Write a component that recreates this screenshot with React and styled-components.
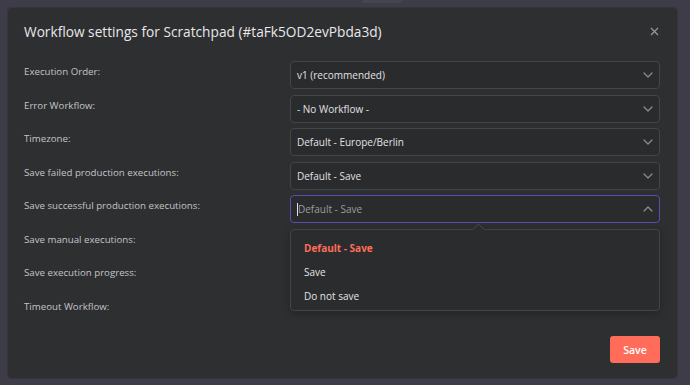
import React from "react"
import styled, { createGlobalStyle } from "styled-components"

const GlobalStyle = createGlobalStyle`
  html, body {
    margin: 0;
    padding: 0;
    background: #3e3c49;
    font-family: "Open Sans", "Liberation Sans", sans-serif;
  }
`

// rows covered by the open dropdown keep their label only
const settings = [
  { label: "Execution Order:", value: "v1 (recommended)" },
  { label: "Error Workflow:", value: "- No Workflow -" },
  { label: "Timezone:", value: "Default - Europe/Berlin" },
  { label: "Save failed production executions:", value: "Default - Save" },
  { label: "Save successful production executions:", value: "Default - Save", open: true },
  { label: "Save manual executions:", value: "" },
  { label: "Save execution progress:", value: "" },
  { label: "Timeout Workflow:", value: "" },
]

const options = ["Default - Save", "Save", "Do not save"]

const Chevron = ({ up }) => (
  <svg width="10" height="6" viewBox="0 0 10 6" fill="none">
    <path
      d={up ? "M1 5 L5 1 L9 5" : "M1 1 L5 5 L9 1"}
      stroke="#8d8d92"
      strokeWidth="1.2"
      strokeLinecap="round"
      strokeLinejoin="round"
    />
  </svg>
)

const App = () => {
  return (
    <Screen>
      <GlobalStyle />
      <Tab />
      <Dialog>
        <Header>
          <Title>Workflow settings for Scratchpad (#taFk5OD2evPbda3d)</Title>
          <Close aria-label="close">
            <svg width="9" height="9" viewBox="0 0 9 9">
              <path d="M1 1 L8 8 M8 1 L1 8" stroke="#9a9aa0" strokeWidth="1.1" />
            </svg>
          </Close>
        </Header>
        <Form>
          {settings.map((s) => (
            <Row key={s.label}>
              <Label>{s.label}</Label>
              <Field>
                {s.value && (
                  <Select $focused={s.open}>
                    <SelectText $placeholder={s.open}>
                      {s.open && <Caret />}
                      {s.value}
                    </SelectText>
                    <Chevron up={s.open} />
                  </Select>
                )}
                {s.open && (
                  <Menu>
                    <MenuArrow />
                    {options.map((o, i) => (
                      <MenuItem key={o} $selected={i === 0}>
                        {o}
                      </MenuItem>
                    ))}
                  </Menu>
                )}
              </Field>
            </Row>
          ))}
        </Form>
        <Footer>
          <SaveButton>Save</SaveButton>
        </Footer>
      </Dialog>
    </Screen>
  )
}

const Screen = styled.div`
  position: relative;
  width: 690px;
  height: 385px;
  padding: 8px 13px 7px 8px;
  box-sizing: border-box;
  overflow: hidden;
`

const Tab = styled.div`
  position: absolute;
  left: 362px;
  top: -4px;
  width: 40px;
  height: 7px;
  border-radius: 3px;
  background: #46444f;
`

const Dialog = styled.div`
  position: relative;
  height: 100%;
  box-sizing: border-box;
  background: #2e2f31;
  border-radius: 4px;
  box-shadow: 0 0 0 1px #363539;
  padding: 0 17px 15px 16px;
  display: flex;
  flex-direction: column;
`

const Header = styled.div`
  display: flex;
  justify-content: space-between;
  align-items: flex-start;
  height: 53px;
  padding-top: 13px;
  box-sizing: border-box;
`

const Title = styled.h1`
  margin: 0;
  font-size: 13.7px;
  font-weight: 400;
  line-height: 22px;
  color: #e8e8ea;
`

const Close = styled.button`
  background: none;
  border: 0;
  padding: 0;
  margin: 6px 1px 0 0;
  line-height: 0;
  cursor: pointer;
`

const Form = styled.div`
  display: flex;
  flex-direction: column;
  gap: 5.5px;
`

const Row = styled.div`
  display: grid;
  grid-template-columns: 266px 1fr;
  height: 28px;
`

const Label = styled.div`
  font-size: 9.7px;
  line-height: 14px;
  padding-top: 4px;
  color: #c4c4c8;
`

const Field = styled.div`
  position: relative;
`

const Select = styled.div`
  height: 28px;
  box-sizing: border-box;
  border: 1px solid ${(p) => (p.$focused ? "#5a4bb3" : "#444548")};
  border-radius: 4px;
  background: #2a2b2d;
  display: flex;
  align-items: center;
  justify-content: space-between;
  padding: 0 6px 0 6px;
`

const SelectText = styled.span`
  display: flex;
  align-items: center;
  font-size: 10px;
  color: ${(p) => (p.$placeholder ? "#9c9ca2" : "#e2e2e4")};
`

const Caret = styled.span`
  display: inline-block;
  width: 1px;
  height: 13px;
  margin-right: 0;
  background: #e0e0e0;
`

const Menu = styled.div`
  position: absolute;
  z-index: 2;
  top: 34px;
  left: 0;
  right: 0;
  height: 82px;
  box-sizing: border-box;
  padding: 6px 0 3px;
  background: #2b2c2e;
  border: 1px solid #434447;
  border-radius: 4px;
  box-shadow: 0 2px 8px rgba(0, 0, 0, 0.25);
`

const MenuArrow = styled.span`
  position: absolute;
  top: -5px;
  left: 183px;
  width: 8px;
  height: 8px;
  background: #2b2c2e;
  border-top: 1px solid #434447;
  border-left: 1px solid #434447;
  transform: rotate(45deg);
`

const MenuItem = styled.div`
  height: 24px;
  line-height: 24px;
  padding-left: 13px;
  font-size: 10px;
  font-weight: ${(p) => (p.$selected ? 700 : 400)};
  color: ${(p) => (p.$selected ? "#ff6d5a" : "#e4e4e6")};
`

const Footer = styled.div`
  margin-top: auto;
  display: flex;
  justify-content: flex-end;
`

const SaveButton = styled.button`
  width: 50px;
  height: 27px;
  border: 0;
  border-radius: 3px;
  background: #ff6d5a;
  color: #ffffff;
  font-family: "Open Sans", "Liberation Sans", sans-serif;
  font-size: 10.5px;
  font-weight: 600;
  cursor: pointer;
`

export default App
